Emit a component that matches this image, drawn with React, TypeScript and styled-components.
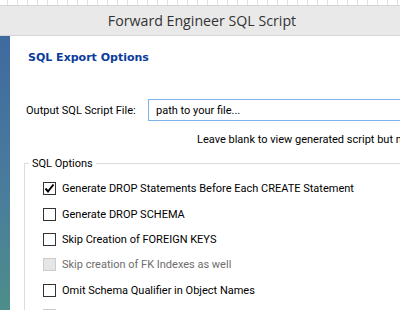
import { createGlobalStyle, styled } from 'styled-components';

const GlobalStyle = createGlobalStyle`
  html, body {
    margin: 0;
    padding: 0;
    background: #ffffff;
    overflow: hidden;
  }
  body {
    font-family: Roboto, 'Liberation Sans', Arial, sans-serif;
  }
`;

const options = [
  { label: 'Generate DROP Statements Before Each CREATE Statement', checked: true },
  { label: 'Generate DROP SCHEMA' },
  { label: 'Skip Creation of FOREIGN KEYS' },
  { label: 'Skip creation of FK Indexes as well', disabled: true },
  { label: 'Omit Schema Qualifier in Object Names' },
  { label: 'Generate Separate CREATE INDEX Statements', disabled: true },
];

type Opt = { label: string; checked?: boolean; disabled?: boolean };

const App = () => {
  return (
    <Window>
      <GlobalStyle />
      <TopStrip />
      <TitleBar>Forward Engineer SQL Script</TitleBar>
      <Body>
        <SideBar />
        <Content>
          <Heading>SQL Export Options</Heading>
          <FileRow>
            <FieldLabel>Output SQL Script File:</FieldLabel>
            <FileInput defaultValue='path to your file...' />
          </FileRow>
          <Hint>Leave blank to view generated script but not save to a file.</Hint>
          <Group>
            <Legend>SQL Options</Legend>
            {options.map((o: Opt) => (
              <OptionRow key={o.label} $disabled={o.disabled}>
                <Box $disabled={o.disabled}>
                  {o.checked && (
                    <svg width='11' height='11' viewBox='0 0 11 11'>
                      <path d='M1.5 5.5 L4 8.5 L9.5 1.5' fill='none' stroke='#000' strokeWidth='2' />
                    </svg>
                  )}
                </Box>
                {o.label}
              </OptionRow>
            ))}
          </Group>
        </Content>
      </Body>
    </Window>
  );
};

const Window = styled.div`
  width: 400px;
  height: 310px;
  overflow: hidden;
  display: flex;
  flex-flow: column;
`;

const TopStrip = styled.div`
  height: 5px;
  flex: none;
  border-bottom: 1px solid #d4d4d4;
  background: repeating-linear-gradient(
    to right,
    transparent 0 7px,
    #e2e2e2 7px 8px,
    transparent 8px 10px
  );
`;

const TitleBar = styled.div`
  height: 29px;
  flex: none;
  background: #e9e9e9;
  border-bottom: 1px solid #d6d6d6;
  display: flex;
  align-items: center;
  justify-content: center;
  font-family: 'Open Sans', 'Liberation Sans', sans-serif;
  font-size: 14.2px;
  color: #333333;
  padding-left: 4px;
`;

const Body = styled.div`
  flex: 1;
  display: flex;
`;

const SideBar = styled.div`
  width: 10px;
  flex: none;
  background: linear-gradient(to bottom, #3f6a9f 0%, #4a7d9c 55%, #4e9087 100%);
`;

const Content = styled.div`
  flex: 1;
  padding: 15px 0 0 14px;
  font-size: 11px;
  color: #000;
`;

const Heading = styled.h1`
  margin: 0 0 0 4px;
  font-family: 'DejaVu Sans', Verdana, sans-serif;
  font-weight: bold;
  font-size: 11px;
  color: #0a3c9c;
`;

const FileRow = styled.div`
  display: flex;
  align-items: center;
  margin-top: 35px;
  margin-left: 2px;
`;

const FieldLabel = styled.span`
  width: 122px;
  flex: none;
  white-space: nowrap;
`;

const FileInput = styled.input`
  flex: 1;
  height: 22px;
  box-sizing: border-box;
  border: 1px solid #7eb4ea;
  border-right: none;
  padding: 0 7px;
  font: inherit;
  color: #000;
  outline: none;
`;

const Hint = styled.div`
  margin: 12px 0 0 173px;
  white-space: nowrap;
`;

const Group = styled.fieldset`
  margin: 11px 0 0 0;
  padding: 6px 0 0 18px;
  border: 1px solid #dcdcdc;
  border-right: none;
  border-bottom: none;
  min-width: 0;
`;

const Legend = styled.legend`
  padding: 0 3px;
  margin-left: -14px;
`;

const OptionRow = styled.label<{ $disabled?: boolean }>`
  display: flex;
  align-items: center;
  gap: 6px;
  height: 25.4px;
  white-space: nowrap;
  color: ${({ $disabled }) => ($disabled ? '#6d6d6d' : '#000')};
`;

const Box = styled.span<{ $disabled?: boolean }>`
  width: 13px;
  height: 13px;
  box-sizing: border-box;
  flex: none;
  display: flex;
  align-items: center;
  justify-content: center;
  border: 1px solid ${({ $disabled }) => ($disabled ? '#cccccc' : '#333333')};
  background: ${({ $disabled }) => ($disabled ? '#e6e6e6' : '#ffffff')};
`;

export default App;
